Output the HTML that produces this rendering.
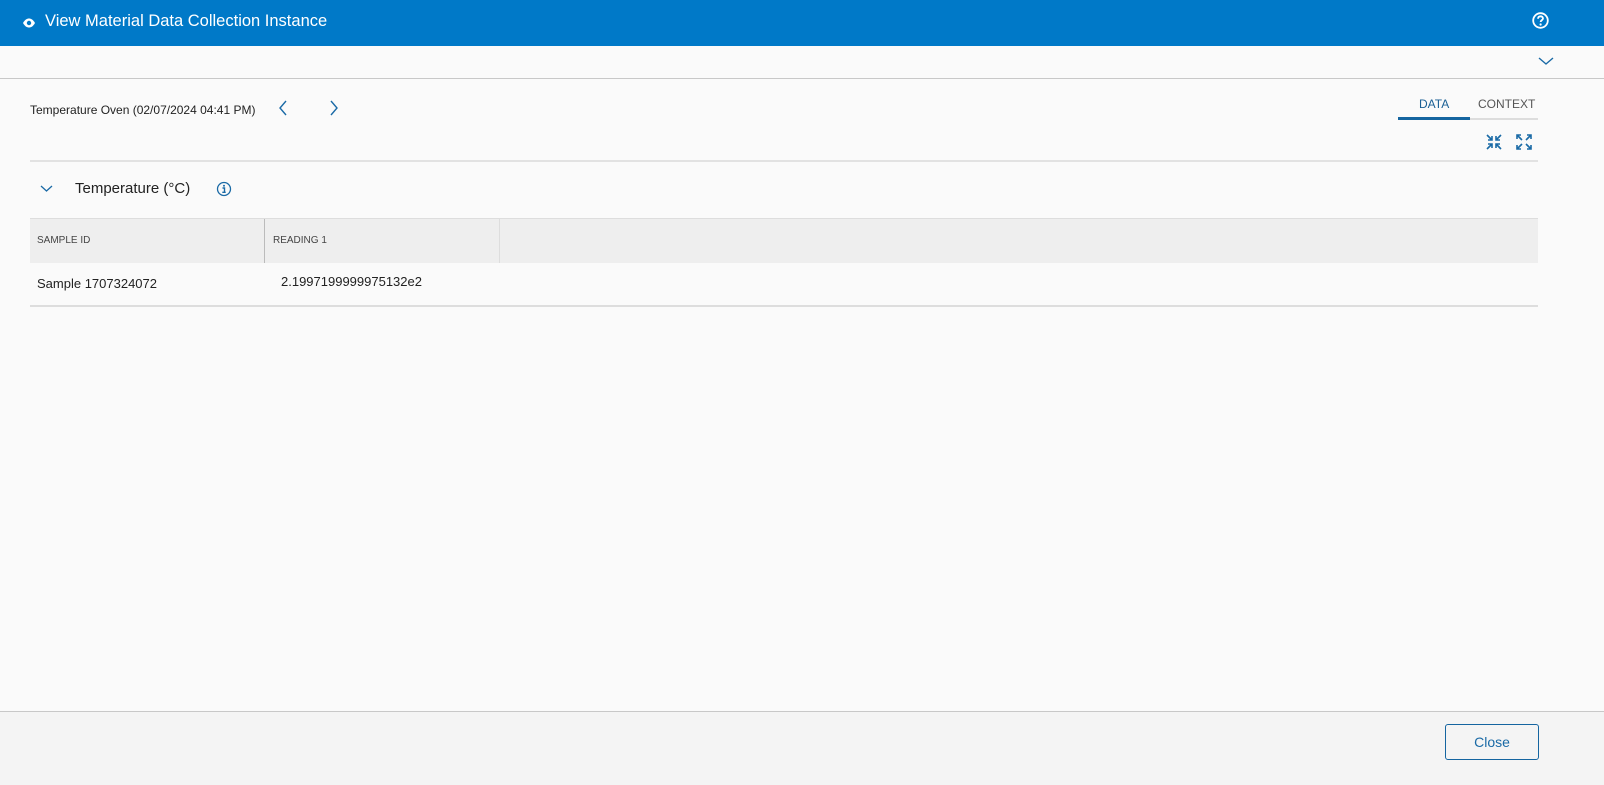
<!DOCTYPE html>
<html><head><style>
*{box-sizing:border-box;margin:0;padding:0}
body{width:1604px;height:785px;background:#fafafa;font-family:"Liberation Sans",sans-serif;position:relative;overflow:hidden;color:#222}
.abs{position:absolute}
</style></head><body>
<div class="abs" style="left:0;top:0;width:1604px;height:46px;background:#0079c8"></div>
<svg class="abs" style="left:22px;top:17px" width="14" height="12" viewBox="0 0 14 12"><path d="M1 6C3 2.5 5 1.5 7 1.5S11 2.5 13 6C11 9.5 9 10.5 7 10.5S3 9.5 1 6Z" fill="#fff"/><circle cx="7" cy="6" r="2.2" fill="#0079c8"/></svg>
<div class="abs" style="left:45px;top:12px;color:#fff;font-size:16.5px">View Material Data Collection Instance</div>
<svg class="abs" style="left:1532px;top:12px" width="17" height="17" viewBox="0 0 17 17"><circle cx="8.5" cy="8.5" r="7.3" fill="none" stroke="#fff" stroke-width="1.8"/><path d="M6 6.7C6 5 7.2 4.3 8.5 4.3S11 5 11 6.5C11 8 8.6 8.3 8.6 10" fill="none" stroke="#fff" stroke-width="1.8"/><circle cx="8.6" cy="12.5" r="1.1" fill="#fff"/></svg>
<svg class="abs" style="left:1538px;top:56px" width="16" height="10" viewBox="0 0 16 10"><path d="M1 2L8 8L15 2" fill="none" stroke="#1a6aa6" stroke-width="1.4"/></svg>
<div class="abs" style="left:0;top:78px;width:1604px;height:1px;background:#c8c8c8"></div>
<div class="abs" style="left:30px;top:103px;font-size:12px;color:#222">Temperature Oven (02/07/2024 04:41 PM)</div>
<svg class="abs" style="left:278px;top:100px" width="10" height="16" viewBox="0 0 10 16"><path d="M8 1L2 8L8 15" fill="none" stroke="#1a6aa6" stroke-width="1.4"/></svg>
<svg class="abs" style="left:329px;top:100px" width="10" height="16" viewBox="0 0 10 16"><path d="M2 1L8 8L2 15" fill="none" stroke="#1a6aa6" stroke-width="1.4"/></svg>
<div class="abs" style="left:1419px;top:97px;font-size:12px;color:#1a5f94">DATA</div>
<div class="abs" style="left:1478px;top:97px;font-size:12px;color:#555">CONTEXT</div>
<div class="abs" style="left:1398px;top:118px;width:140px;height:2px;background:#ddd"></div>
<div class="abs" style="left:1398px;top:117px;width:72px;height:3px;background:#1565a0"></div>
<svg class="abs" style="left:1486px;top:134px" width="16" height="16" viewBox="0 0 16 16" fill="none" stroke="#1a6aa6" stroke-width="1.6"><path d="M1 1L6 6M6 2V6H2M15 1L10 6M10 2V6H14M1 15L6 10M6 14V10H2M15 15L10 10M10 14V10H14"/></svg>
<svg class="abs" style="left:1516px;top:134px" width="16" height="16" viewBox="0 0 16 16" fill="none" stroke="#1a6aa6" stroke-width="1.6"><path d="M6 6L1 1M1 5V1H5M10 6L15 1M11 1H15V5M6 10L1 15M1 11V15H5M10 10L15 15M11 15H15V11"/></svg>
<div class="abs" style="left:30px;top:160px;width:1508px;height:2px;background:#e2e2e2"></div>
<svg class="abs" style="left:40px;top:185px" width="13" height="8" viewBox="0 0 13 8"><path d="M1 1L6.5 6L12 1" fill="none" stroke="#1a6aa6" stroke-width="1.3"/></svg>
<div class="abs" style="left:75px;top:180px;font-size:15px;color:#222">Temperature (°C)</div>
<svg class="abs" style="left:216px;top:181px" width="16" height="16" viewBox="0 0 16 16"><circle cx="8" cy="8" r="6.5" fill="none" stroke="#1a6aa6" stroke-width="1.3"/><circle cx="8" cy="4.8" r="1" fill="#1a6aa6"/><path d="M6.5 7H8.5V11M6.3 11.3H9.7" fill="none" stroke="#1a6aa6" stroke-width="1.4"/></svg>
<div class="abs" style="left:30px;top:218px;width:1508px;height:45px;background:#eeeeee;border-top:1px solid #ddd"></div>
<div class="abs" style="left:264px;top:219px;width:1px;height:87px;background:#bbb"></div>
<div class="abs" style="left:499px;top:219px;width:1px;height:44px;background:#ddd"></div>
<div class="abs" style="left:30px;top:263px;width:470px;height:43px;background:#fafafa"></div>
<div class="abs" style="left:37px;top:235px;font-size:10px;color:#444">SAMPLE ID</div>
<div class="abs" style="left:273px;top:235px;font-size:10px;color:#444">READING 1</div>
<div class="abs" style="left:37px;top:276px;font-size:13px;color:#222">Sample 1707324072</div>
<div class="abs" style="left:281px;top:274px;font-size:13px;color:#222">2.1997199999975132e2</div>
<div class="abs" style="left:30px;top:305px;width:1508px;height:2px;background:#ddd"></div>
<div class="abs" style="left:0;top:711px;width:1604px;height:74px;background:#f4f4f4;border-top:1px solid #c8c8c8"></div>
<div class="abs" style="left:1445px;top:724px;width:94px;height:36px;border:1px solid #1565a0;border-radius:3px;color:#1a6aa6;font-size:14px;text-align:center;line-height:34px">Close</div>
</body></html>
